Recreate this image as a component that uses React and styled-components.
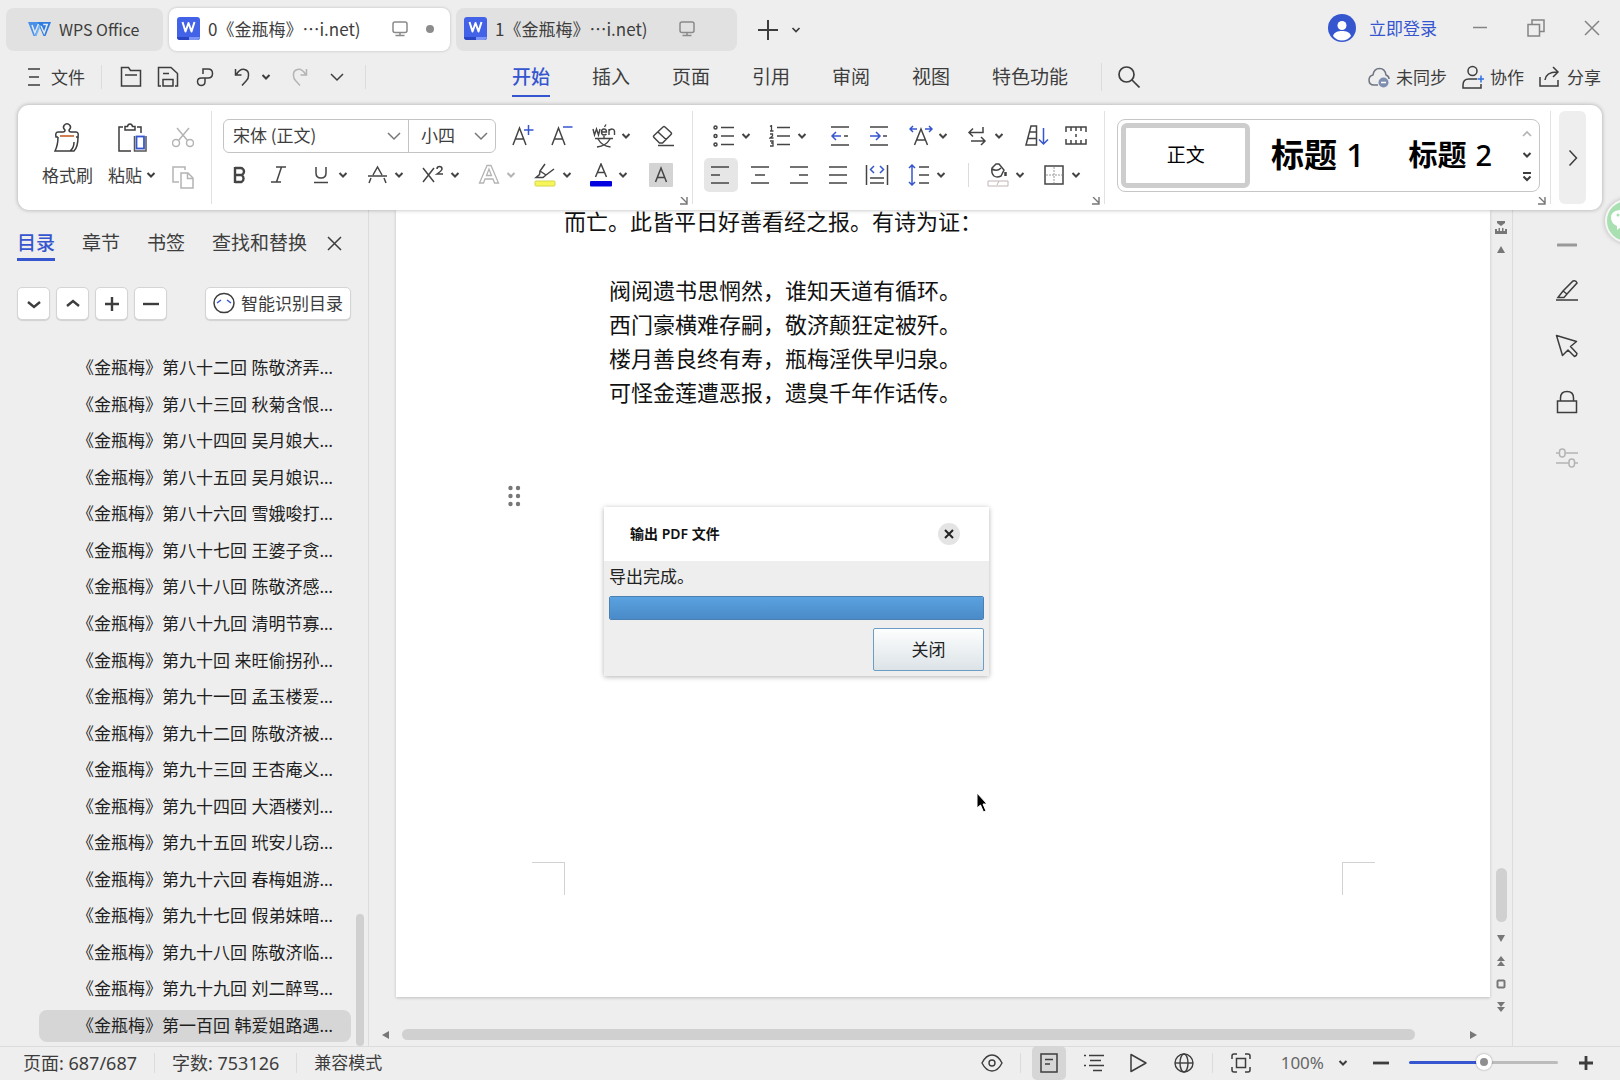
import React, { useState } from 'react'
import styled, { createGlobalStyle } from 'styled-components'

const UI_FONT = `'Noto Sans CJK SC', 'Noto Sans', sans-serif`;
const MIXED_FONT = `'Noto Sans', 'Noto Sans CJK SC', sans-serif`;

const BLUE = '#3656cf';
const INK = '#3d3d3d';
const MUTED = '#b4b4b4';
const LINE = '#dcdcdc';

const GlobalStyle = createGlobalStyle`
  * { box-sizing: border-box; }
  body {
    margin: 0;
    background: #eeeeee;
    color: ${INK};
    font-family: ${UI_FONT};
    font-size: 17px;
    line-height: 24px;
  }
  button, select, input { font: inherit; color: inherit; }
`;

/* ---------- shared parts ---------- */

const Svg = styled.svg`
  display: block;
  flex: none;
  fill: none;
  stroke: currentColor;
  stroke-width: ${props => props.$weight || 1.5};
`;

const Icon = ({ w = 22, h = 22, weight, children }) => (
  <Svg width={w} height={h} viewBox={`0 0 ${w} ${h}`} $weight={weight} aria-hidden="true">{children}</Svg>
);

const Caret = ({ weight = 2 }) => (
  <Icon w={12} h={12} weight={weight}><path d="M2.500 4l3.500 3.500 3.500-3.500" /></Icon>
);

const WideCaret = () => (
  <Icon w={14} h={14}><path d="M1 4l6 6 6-6" /></Icon>
);

const PlainButton = styled.button`
  display: flex;
  align-items: center;
  justify-content: center;
  padding: 0;
  border: 0;
  background: none;
  white-space: nowrap;
  cursor: pointer;
`;

const Divider = styled.span`
  flex: none;
  width: 1px;
  height: ${props => props.$tall || 24}px;
  background: ${LINE};
`;

/* ---------- window ---------- */

const Window = styled.div`
  position: relative;
  display: flex;
  flex-direction: column;
  height: 100vh;
  overflow: hidden;
`;

const TitleBar = styled.header`
  display: flex;
  gap: 6px;
  height: 52px;
  padding: 8px 0 0 6px;
`;

const Tab = styled(PlainButton)`
  justify-content: flex-start;
  gap: 8px;
  width: 281px;
  height: 43px;
  padding: 0 16px 2px 8px;
  border-radius: 8px;
  background: ${props => props.$active ? '#fff' : '#e1e1e1'};
  box-shadow: ${props => props.$active ? '0 0 3px rgba(0, 0, 0, .22)' : 'none'};
`;

const HomeTab = styled(Tab)`
  width: 157px;
  padding: 0 0 2px 22px;
  font-size: 16px;
`;

const TabName = styled.span`
  flex: 1;
  text-align: left;
`;

const Screen = styled.span`
  margin-right: 10px;
  color: #8a8a8a;
`;

const UnsavedDot = styled.span`
  width: 8px;
  height: 8px;
  border-radius: 50%;
  background: ${props => props.$on ? '#8c8c8c' : 'transparent'};
`;

const NewTab = styled.div`
  display: flex;
  height: 43px;
  padding-left: 5px;
`;

const AddButton = styled(PlainButton)`
  width: 40px;
`;

const TabListButton = styled(PlainButton)`
  width: 16px;
`;

const Account = styled.div`
  display: flex;
  align-items: center;
  height: 40px;
  margin-left: auto;
`;

const Login = styled.a`
  display: flex;
  align-items: center;
  gap: 13px;
  margin-right: 15px;
  color: ${BLUE};
  text-decoration: none;
`;

const WindowButton = styled(PlainButton)`
  width: 56px;
  height: 40px;
  color: #858585;
`;

/* ---------- menu ---------- */

const MenuBar = styled.nav`
  display: flex;
  align-items: center;
  flex: none;
  height: 53px;
  padding: 0 19px 3px 28px;
`;

const FileMenu = styled(PlainButton)`
  gap: 11px;
  margin-right: 16px;
`;

const QuickTools = styled.div`
  display: flex;
  align-items: center;
  padding: 0 10px;
`;

const QuickButton = styled(PlainButton)`
  width: 37px;
  height: 36px;
  color: ${props => props.disabled ? MUTED : INK};
`;

const QuickCaret = styled(PlainButton)`
  width: 12px;
  margin-right: 9px;
`;

const MenuTabs = styled.div`
  display: flex;
  gap: 42px;
  margin: 0 33px 0 146px;
`;

const MenuTab = styled(PlainButton)`
  height: 40px;
  padding-bottom: 1px;
  font-size: 19px;
  color: ${props => props.$active ? BLUE : INK};
  font-weight: ${props => props.$active ? 500 : 400};
  border-bottom: 2px solid ${props => props.$active ? BLUE : 'transparent'};
`;

const SearchButton = styled(PlainButton)`
  margin-left: 16px;
`;

const ShareTools = styled.div`
  display: flex;
  gap: 15px;
  margin-left: auto;
`;

const ShareButton = styled(PlainButton)`
  gap: 6px;
`;

/* ---------- ribbon ---------- */

const Ribbon = styled.section`
  position: relative;
  z-index: 2;
  display: flex;
  flex: none;
  height: 105px;
  margin: 0 18px;
  border-radius: 11px;
  background: #fff;
  box-shadow: 0 0 4px rgba(0, 0, 0, .3);
`;

const RibbonLine = styled.span`
  flex: none;
  width: 1px;
  margin: 6px 0;
  background: #e2e2e2;
`;

const Clipboard = styled.div`
  display: flex;
  gap: 15px;
  padding: 18px 17px 0 24px;
`;

const BigTool = styled(PlainButton)`
  flex-direction: column;
  justify-content: flex-start;
  gap: 10px;
`;

const BigLabel = styled.span`
  display: flex;
  align-items: center;
  gap: 3px;
`;

const SmallTools = styled.div`
  display: flex;
  flex-direction: column;
  gap: 17px;
  padding-top: 3px;
  color: ${MUTED};
`;

const Group = styled.div`
  display: flex;
  flex-direction: column;
  padding: 11px 4px 0 8px;
`;

const ToolRow = styled.div`
  display: flex;
  align-items: center;
  height: 39px;
  padding-right: 5px;
`;

const DropBox = styled(PlainButton)`
  justify-content: flex-start;
  gap: 4px;
  width: 56px;
  height: 34px;
  padding-left: 11px;
  color: ${props => props.disabled ? MUTED : '#444'};
`;

const Tool = styled(PlainButton)`
  width: 39px;
  height: 34px;
  color: #444;

  ${DropBox} + & { margin-left: 7px; }
`;

const ToolGlyph = styled.span`
  display: flex;
  justify-content: center;
  width: 24px;
`;

const Pressed = styled.span`
  display: flex;
  align-items: center;
  justify-content: center;
  width: 34px;
  height: 34px;
  border-radius: 5px;
  background: #e6e6e6;
`;

const ToolDivider = styled(Divider)`
  margin: 0 6px 0 16px;
`;

const Launcher = styled(PlainButton)`
  align-self: flex-end;
  margin-top: 3px;
  color: #777;
`;

const Combo = styled.span`
  display: grid;
  align-items: center;
  width: ${props => props.$w}px;
  height: 34px;
  border: 1px solid #c4c4c4;
  border-radius: ${props => props.$last ? '0 6px 6px 0' : '6px 0 0 6px'};
  margin-left: ${props => props.$last ? -1 : 3}px;
  margin-right: ${props => props.$last ? 7 : 0}px;

  & > * { grid-area: 1 / 1; }
  & > svg { justify-self: end; margin-right: 7px; pointer-events: none; color: #777; }
`;

const ComboSelect = styled.select`
  appearance: none;
  width: 100%;
  height: 32px;
  padding: 0 0 1px ${props => props.$pad}px;
  border: 0;
  background: none;
`;

const StyleGroup = styled(Group)`
  flex: 1;
  padding-left: 12px;
`;

const Gallery = styled.div`
  display: flex;
  gap: 3px;
  height: 73px;
  margin: 3px 6px 2px 0;
  padding: 3px;
  border: 1px solid #c6c6c6;
  border-radius: 8px;
`;

const StyleCell = styled(PlainButton)`
  flex: 1;
  padding-bottom: 2px;
  color: #000;
  font-family: ${MIXED_FONT};
  font-size: ${props => props.$size}px;
  line-height: 40px;
  font-weight: ${props => props.$size > 20 ? 700 : 400};
  border: 5px solid ${props => props.$active ? '#cdcdcd' : 'transparent'};
  border-radius: 6px;
`;

const Level = styled.span`
  margin-left: 9px;
  font-weight: 500;
`;

const GallerySteps = styled.div`
  display: flex;
  flex-direction: column;
  justify-content: space-around;
  width: 18px;
`;

const More = styled(PlainButton)`
  width: 27px;
  margin: 6px 16px 6px 8px;
  border-radius: 6px;
  background: #eeeeee;
`;

/* ---------- sidebar ---------- */

const Body = styled.div`
  display: flex;
  flex: 1;
  min-height: 0;
`;

const Sidebar = styled.aside`
  display: flex;
  flex-direction: column;
  flex: none;
  width: 369px;
  border-right: 1px solid ${LINE};
`;

const SideTabs = styled.div`
  display: flex;
  gap: 27px;
  padding: 19px 0 0 17px;
`;

const SideTab = styled(PlainButton)`
  align-items: flex-start;
  height: 32px;
  font-size: 19px;
  line-height: 26px;
  color: ${props => props.$active ? BLUE : INK};
  font-weight: ${props => props.$active ? 500 : 400};
  border-bottom: 3px solid ${props => props.$active ? BLUE : 'transparent'};
`;

const SideClose = styled(PlainButton)`
  height: 28px;
  margin-left: -7px;
`;

const SideTools = styled.div`
  display: flex;
  gap: 6px;
  margin: 26px 17px 30px;
`;

const SquareButton = styled(PlainButton)`
  width: 33px;
  height: 33px;
  border: 1px solid #d4d4d4;
  border-radius: 5px;
  background: #fff;
  box-shadow: 0 1px 1px rgba(0, 0, 0, .12);
`;

const SmartButton = styled(SquareButton)`
  width: auto;
  gap: 6px;
  margin-left: auto;
  padding: 0 7px 1px 7px;
`;

const OutlineWrap = styled.div`
  display: flex;
  flex: 1;
  min-height: 0;
`;

const Outline = styled.ul`
  display: flex;
  flex-direction: column;
  flex: 1;
  margin: 0 5px 2px 39px;
  padding: 0;
  list-style: none;
`;

const OutlineRow = styled.li`
  display: flex;
  flex: 1;
  padding: 2px 0;
`;

const OutlineLink = styled.a`
  display: flex;
  align-items: center;
  flex: 1;
  padding-left: 38px;
  border-radius: 8px;
  background: ${props => props.$active ? '#d6d6d6' : 'none'};
  color: #1f1f1f;
  font-family: ${MIXED_FONT};
  text-decoration: none;
  white-space: nowrap;
`;

const SideTrack = styled.div`
  display: flex;
  align-items: flex-end;
  width: 8px;
  margin-right: 4px;
`;

const Thumb = styled.span`
  width: 100%;
  height: ${props => props.$h};
  border-radius: 6px;
  background: #d0d0d0;
`;

/* ---------- document ---------- */

const DocArea = styled.main`
  position: relative;
  display: flex;
  flex: 1;
  min-width: 0;
`;

const Canvas = styled.div`
  display: flex;
  flex-direction: column;
  flex: 1;
  min-width: 0;
`;

const Page = styled.article`
  display: flex;
  flex-direction: column;
  flex: 1;
  margin: 0 0 26px 27px;
  padding-bottom: 102px;
  background: #fff;
  box-shadow: 0 1px 3px rgba(0, 0, 0, .2);
  color: #111;
  font-family: ${UI_FONT};
  font-size: 22px;
`;

const Prose = styled.p`
  margin: 0;
  padding-left: 168px;
  line-height: 20px;
`;

const Poem = styled.p`
  margin: 42px 0 77px;
  padding-left: 213px;
  line-height: 34px;
`;

const DragHandle = styled.span`
  padding-left: 112px;
  color: #777;
`;

const Corners = styled.div`
  display: flex;
  justify-content: space-between;
  margin-top: auto;
  padding: 0 115px 0 136px;
`;

const Corner = styled.span`
  width: 33px;
  height: 33px;
  border: solid #d2d2d2;
  border-width: ${props => props.$right ? '1px 0 0 1px' : '1px 1px 0 0'};
`;

const HScroll = styled.div`
  display: flex;
  align-items: center;
  gap: 10px;
  height: 23px;
  padding: 0 11px;
  color: #777;
`;

const HTrack = styled.div`
  flex: 1;
`;

const HThumb = styled.div`
  width: 96%;
  height: 11px;
  border-radius: 6px;
  background: #d0d0d0;
`;

const VScroll = styled.div`
  display: flex;
  flex-direction: column;
  align-items: center;
  width: 22px;
  padding: 7px 0 27px;
  color: #777;
`;

const VStep = styled(PlainButton)`
  width: 22px;
  height: 22px;
  margin-bottom: ${props => props.$loose ? 1 : 0}px;
`;

const VTrack = styled.div`
  display: flex;
  align-items: flex-end;
  flex: 1;
  width: 11px;
  margin-bottom: 5px;
`;

const Rail = styled.aside`
  display: flex;
  flex-direction: column;
  align-items: center;
  flex: none;
  width: 108px;
  padding-top: 18px;
  border-left: 1px solid ${LINE};
`;

const RailButton = styled(PlainButton)`
  width: 56px;
  height: ${props => props.$short ? 34 : 56}px;
  color: ${props => props.disabled ? MUTED : INK};
`;

const Bubble = styled.button`
  position: absolute;
  top: 199px;
  right: -29px;
  display: flex;
  align-items: center;
  width: 44px;
  height: 44px;
  padding: 0;
  border: 2px solid #f6f6f6;
  border-radius: 50%;
  background: #a9e0b2;
  box-shadow: 0 0 5px rgba(0, 0, 0, .25);
  color: #fff;
`;

const Pointer = styled.span`
  position: absolute;
  top: 582px;
  left: 607px;
`;

/* ---------- export dialog ---------- */

const Dialog = styled.section`
  position: absolute;
  top: 297px;
  left: 235px;
  width: 385px;
  background: #eeeeee;
  box-shadow: 0 1px 5px rgba(0, 0, 0, .3);
  color: #222;
`;

const DialogHead = styled.div`
  display: flex;
  align-items: center;
  justify-content: space-between;
  height: 54px;
  padding: 0 29px 0 26px;
  background: #fff;
`;

const DialogTitle = styled.h2`
  margin: 0;
  color: #111;
  font-family: ${MIXED_FONT};
  font-size: 14px;
  font-weight: 600;
`;

const RoundClose = styled(PlainButton)`
  width: 22px;
  height: 22px;
  border-radius: 50%;
  background: #e4e4e4;
`;

const DialogBody = styled.div`
  display: flex;
  flex-direction: column;
  padding: 3px 5px 5px;
`;

const ExportBar = styled.progress`
  appearance: none;
  width: 100%;
  height: 24px;
  margin: 8px 0;
  border: 1px solid #4a80b2;
  border-radius: 2px;
  overflow: hidden;

  &::-webkit-progress-bar { background: #eee; }
  &::-webkit-progress-value { background: linear-gradient(#5ba2e0, #4a8ac8); }
`;

const CloseButton = styled(PlainButton)`
  align-self: flex-end;
  width: 111px;
  height: 43px;
  padding-bottom: 2px;
  border: 1px solid #6d9dc5;
  border-radius: 2px;
  background: linear-gradient(#fdfefe, #dce3e7);
`;

/* ---------- status bar ---------- */

const StatusBar = styled.footer`
  display: flex;
  align-items: center;
  gap: 17px;
  flex: none;
  height: 34px;
  padding: 0 17px 2px 23px;
  border-top: 1px solid ${LINE};
  font-family: ${MIXED_FONT};
`;

const Count = styled.span`
  font-size: 18px;
`;

const StatusTools = styled.div`
  display: flex;
  align-items: center;
  gap: 11px;
  margin-left: auto;
`;

const StatusButton = styled(PlainButton)`
  width: 34px;
  height: 34px;
  border-radius: 5px;
  background: ${props => props.$active ? '#d6d6d6' : 'none'};
`;

const ZoomButton = styled(PlainButton)`
  gap: 13px;
  padding: 0 4px 0 12px;
`;

const ZoomValue = styled.span`
  color: #666;
`;

const ZoomRange = styled.input`
  appearance: none;
  width: 149px;
  height: 20px;
  margin: 0;
  background: none;

  &::-webkit-slider-runnable-track {
    height: 3px;
    border-radius: 2px;
    background: linear-gradient(90deg, ${BLUE} 50%, #bcbcbc 50%);
  }
  &::-webkit-slider-thumb {
    appearance: none;
    width: 16px;
    height: 16px;
    margin-top: -7px;
    border: 4px solid #fff;
    border-radius: 50%;
    background: #8f8f8f;
    box-shadow: 0 0 2px rgba(0, 0, 0, .4);
  }
`;

/* ---------- drawings ---------- */

const WpsLogo = () => (
  <Icon w={23} h={16}>
    <path d="M0 1h12l-4.500 14h-2z" fill="#4a90e8" stroke="none" />
    <path d="M9.500 1H23l-5.500 14h-2z" fill="#2f7be0" stroke="none" />
    <path d="M4 4l2.800 8L10.500 3M13 5l3.200 7 3-8.500h-4" stroke="#e4e9f0" strokeWidth="1.500" />
    <path d="M12 4L7.500 15" stroke="#6db0f5" strokeWidth="1.800" />
  </Icon>
);

const WordBadge = () => (
  <Icon w={23} h={23}>
    <rect width="23" height="23" rx="3" fill="#4262e8" stroke="none" />
    <path d="M0 20h23a3 3 0 0 1-3 3H3a3 3 0 0 1-3-3z" fill="#2a45c4" stroke="none" />
    <path d="M12 20h11a3 3 0 0 1-3 3h-8z" fill="#7d96f5" stroke="none" />
    <path d="M5.500 5l3 9.500L11.500 6l3 8.500L17.500 5" stroke="#fff" strokeWidth="2" strokeLinejoin="round" />
  </Icon>
);

const Monitor = () => (
  <Icon w={16} h={16}>
    <rect x="1" y="1" width="14" height="10.500" rx="2" />
    <path d="M8 11.500v3M3.500 14.500h9" />
  </Icon>
);

const Avatar = () => (
  <Icon w={28} h={28}>
    <circle cx="14" cy="14" r="14" fill={BLUE} stroke="none" />
    <circle cx="14" cy="11.500" r="4.500" fill="#fff" stroke="none" />
    <path d="M5 22c1-4 5-5 9-5s8 1 9 5c-2.500 3-5.500 4.500-9 4.500S7.500 25 5 22z" fill="#fff" stroke="none" />
  </Icon>
);

const FormatBrush = () => (
  <Icon w={28} h={30}>
    <path d="M4 14H2q-1-5 2-5h5q2 0 2-2Q8.500 5 10 2.500q3-3.500 6 0Q17.500 5 15 7q0 2 2 2h5q3 0 2 5h-2" />
    <path d="M4 14Q4 22 1 28h19q4-4 4-14M20 19q0 6-4 9" />
    <path d="M6 13h14" stroke="#d08050" strokeWidth="2" />
  </Icon>
);

const PasteBoard = () => (
  <Icon w={30} h={30}>
    <path d="M5 4H1v24h12M19 4h4v6M7 3.500h2.500Q10 1 12 1t2.500 2.500H17V7H7z" />
    <path d="M16.500 13v15H28V13" stroke="#555" />
    <rect x="18.500" y="13.500" width="7.500" height="12" stroke={BLUE} strokeWidth="1.800" />
  </Icon>
);

const Scissors = () => (
  <Icon>
    <path d="M5 2l10.500 12.500M17 2L6.500 14.500" />
    <circle cx="4" cy="17" r="3.500" /><circle cx="18" cy="17" r="3.500" />
  </Icon>
);

const CopyPages = () => (
  <Icon w={22} h={24}>
    <path d="M7 17H1V2h12v3" />
    <path d="M9 8h7l5 5v10H9zM15.500 8v5.500H21" />
  </Icon>
);

const TextUp = () => <Icon><path d="M1 20L7.500 3 14 20M3.500 14h8" /><path d="M16.500 0v10M12 5h9.500" stroke={BLUE} /></Icon>;
const TextDown = () => <Icon><path d="M1 20L7.500 3 14 20M3.500 14h8" /><path d="M12 2h9.500" stroke={BLUE} /></Icon>;

const Pinyin = () => (
  <Icon w={24} h={24} weight={1.400}>
    <path d="M1 5l1.500 6 2-6 2 6L8 5M9.500 8h5q0-3-2.500-3T9.500 8t2.500 3q1.500 0 2.500-1M12.500 3L14 .5M17 11V5M17 7q1-2 3-2t2.500 2v4" />
    <path d="M3 14.500h18M12 12v2.500M6 15q4 7 12.500 8M18 15q-4 7-13 8" />
  </Icon>
);

const Eraser = () => (
  <Icon w={24} h={22}><path d="M7.500 18L2 12.500Q1 11.500 2 10.500L11 2q1-1 2 0l6 5.500q1 1 0 2L10.500 18zM6 7l8 7.500M6 20.500h16" /></Icon>
);

const Bold = () => <Icon weight={2.400}><path d="M6 3v16M6 4h5.500a3.500 3.500 0 0 1 0 7H6h6.500a4 4 0 0 1 0 7H6" /></Icon>;
const Italic = () => <Icon><path d="M8 3h10M3 18h10M13.500 3l-5 15" /></Icon>;
const Underline = () => <Icon><path d="M6 3v6q0 5 5 5t5-5V3M4 18.500h14" /></Icon>;
const Strike = () => <Icon><path d="M2 12h19M7 11l4.500-8L16 11M5 14l-2 5M18 14l2 5" /></Icon>;
const Superscript = () => <Icon><path d="M1 4l11 14M12 4L1 18M15 5q0-2.500 2.500-2.500T20 5q0 1.500-5 5h6" /></Icon>;

const OutlineA = () => (
  <Icon weight={1.300}><path d="M1.500 19L9 1.500h4L20.500 19h-4l-1.500-4H7l-1.500 4zM8.500 11.500h5L11 5z" /></Icon>
);

const Highlighter = () => (
  <Icon w={22} h={24}>
    <path d="M11 1L6 8l-.5 3.500L2 14.500h7l3-2.500 8-6M6 8l6 4" />
    <rect x="1" y="18" width="20" height="5" rx="1" fill="#f6f65a" stroke="#d6d64c" strokeWidth="1" />
  </Icon>
);

const FontColor = () => (
  <Icon w={22} h={24}>
    <path d="M5.500 14L11 1l5.500 13M7.500 9.500h7" />
    <rect x="0" y="18" width="22" height="5.500" rx="1" fill="#0000e0" stroke="none" />
  </Icon>
);

const ShadedA = () => (
  <Icon w={24} h={24}>
    <rect width="24" height="24" rx="1" fill="#d4d4d4" stroke="none" />
    <path d="M6.500 19L12 5l5.500 14M8.500 14.500h7" />
  </Icon>
);

const Bullets = () => (
  <Icon>
    <path d="M8 2.500h13M8 11h13M8 19.500h13" />
    <circle cx="2.500" cy="2.500" r="1.500" /><circle cx="2.500" cy="11" r="1.500" /><circle cx="2.500" cy="19.500" r="1.500" />
  </Icon>
);

const Numbered = () => (
  <Icon>
    <path d="M8 2.500h13M8 11h13M8 19.500h13" />
    <path d="M1 1.500l1.500-1V6M1 6h3.500M1 9h2.500v2L1 13h3.500M1 16h3v2H2h2v3H1" strokeWidth="1.300" />
  </Icon>
);

const Outdent = () => <Icon><path d="M2 2h18M2 20h18M15 11h4" /><path d="M12 11H3M7 7l-4 4 4 4" stroke={BLUE} /></Icon>;
const Indent = () => <Icon><path d="M2 2h18M2 20h18M15 11h4" /><path d="M2 11h10M8 7l4 4-4 4" stroke={BLUE} /></Icon>;

const Scale = () => (
  <Icon w={24} h={22}>
    <path d="M5.500 20L12 4l6.500 16M7.500 15h9" />
    <path d="M1 4h7M4 1L1 4l3 3M16 4h7M20 1l3 3-3 3" stroke={BLUE} />
  </Icon>
);

const Wrap = () => <Icon><path d="M17 2v5.500H3M7 3.500l-4 4 4 4M5 16h14M15 12l4 4-4 4" /></Icon>;

const Sort = () => (
  <Icon w={24} h={22}>
    <path d="M6 1h5.500v19H1zM5 7h6.500M3 13.500h8.500" />
    <path d="M18.500 3v16M14 14.500l4.500 4.500 4.500-4.500" stroke={BLUE} />
  </Icon>
);

const Marks = () => (
  <Icon w={22} h={20}><path d="M1 6V1h20v5M6 1v4M11 1v4M16 1v4M1 13v5h20v-5M6 18v-4M11 18v-4M16 18v-4M11 8v3" /></Icon>
);

const alignPaths = {
  left: 'M1 3h18M1 11h9M1 19h18',
  center: 'M2 3h18M6 11h10M2 19h18',
  right: 'M2 3h18M11 11h9M2 19h18',
  justify: 'M2 3h18M2 11h18M2 19h18',
};
const Align = ({ kind }) => <Icon><path d={alignPaths[kind]} /></Icon>;

const Distribute = () => (
  <Icon w={24} h={22}>
    <path d="M1.500 1v20M22.500 1v20M5 14h14M5 19h14" />
    <path d="M9 2L5.500 5.500 9 9M15 2l3.500 3.500L15 9" stroke={BLUE} />
  </Icon>
);

const LineSpacing = () => (
  <Icon>
    <path d="M11 3h10M11 11h10M11 19h10" />
    <path d="M4 1v20M1 4l3-3 3 3M1 18l3 3 3-3" stroke={BLUE} />
  </Icon>
);

const Bucket = () => (
  <Icon w={22} h={24}>
    <path d="M5 5L9 1h3l5 6-3 6q-4 2-7 0Q4 10 5 5zM5 6q5 3 9-1" /><path d="M18.500 9v4" strokeWidth="2.500" />
    <path d="M1 18h20v5H1zM10 22l2-4" stroke="#c2b4b4" strokeWidth="1" />
  </Icon>
);

const Borders = () => (
  <Icon w={20} h={20}>
    <rect x="1" y="1" width="18" height="18" />
    <path d="M10 2v16M2 10h16" stroke="#999" strokeWidth="1" strokeDasharray="2 1" />
  </Icon>
);

const LaunchIcon = () => <Icon w={8} h={8} weight={1.400}><path d="M1 0l6 6M7 0v7H0" /></Icon>;
const Cross = ({ s = 14, weight }) => <Icon w={s} h={s} weight={weight}><path d={`M1 1l${s - 2} ${s - 2}M${s - 1} 1L1 ${s - 1}`} /></Icon>;

const Triangle = ({ d }) => <Icon w={12} h={12}><path d={d} fill="currentColor" stroke="none" /></Icon>;

/* ---------- content ---------- */

const menus = ['开始', '插入', '页面', '引用', '审阅', '视图', '特色功能'];
const sideTabs = ['目录', '章节', '书签', '查找和替换'];

const chapters = [
  '第八十二回 陈敬济弄', '第八十三回 秋菊含恨', '第八十四回 吴月娘大', '第八十五回 吴月娘识',
  '第八十六回 雪娥唆打', '第八十七回 王婆子贪', '第八十八回 陈敬济感', '第八十九回 清明节寡',
  '第九十回 来旺偷拐孙', '第九十一回 孟玉楼爱', '第九十二回 陈敬济被', '第九十三回 王杏庵义',
  '第九十四回 大酒楼刘', '第九十五回 玳安儿窃', '第九十六回 春梅姐游', '第九十七回 假弟妹暗',
  '第九十八回 陈敬济临', '第九十九回 刘二醉骂', '第一百回 韩爱姐路遇',
];

const DropTool = ({ label, disabled, children }) => (
  <DropBox disabled={disabled} aria-label={label}>
    <ToolGlyph>{children}</ToolGlyph>
    <Caret />
  </DropBox>
);

const Title = () => (
  <TitleBar>
    <HomeTab><WpsLogo />WPS Office</HomeTab>
    <Tab $active>
      <WordBadge />
      <TabName>0《金瓶梅》…i.net)</TabName>
      <Screen><Monitor /></Screen>
      <UnsavedDot $on />
    </Tab>
    <Tab>
      <WordBadge />
      <TabName>1《金瓶梅》…i.net)</TabName>
      <Screen><Monitor /></Screen>
      <UnsavedDot />
    </Tab>
    <NewTab>
      <AddButton aria-label="新建"><Icon w={20} h={20} weight={2}><path d="M10 0v20M0 10h20" /></Icon></AddButton>
      <TabListButton aria-label="标签列表"><Caret weight={1.700} /></TabListButton>
    </NewTab>
    <Account>
      <Login href="#login"><Avatar />立即登录</Login>
      <WindowButton aria-label="最小化"><Icon w={14} h={14}><path d="M0 6.500h14" /></Icon></WindowButton>
      <WindowButton aria-label="还原">
        <Icon w={18} h={18}><path d="M1 5.500h11.500V17H1zM5 5.500V1h12v11.500h-4.500" /></Icon>
      </WindowButton>
      <WindowButton aria-label="关闭窗口"><Cross s={16} /></WindowButton>
    </Account>
  </TitleBar>
);

const Menu = () => {
  const [active, setActive] = useState('开始');

  return (
    <MenuBar>
      <FileMenu>
        <Icon w={12} h={18}><path d="M0 1h12M1 9h10M0 17h12" /></Icon>
        文件
      </FileMenu>
      <Divider />
      <QuickTools>
        <QuickButton aria-label="打开">
          <Icon><path d="M1.500 20V1.500h7l2 3h10V20zM5 9h12" /></Icon>
        </QuickButton>
        <QuickButton aria-label="保存">
          <Icon><path d="M4 20H1.500V1.500H14l6.500 6V20H18M6 20v-6.500h10V20zM6 7.500h6" /></Icon>
        </QuickButton>
        <QuickButton aria-label="输出为PDF">
          <Icon w={18} h={20}><path d="M7 7V2h5q4.500 0 4.500 4.500T12 11H5.500Q1.500 11 1.500 14.500T5 18.500q4 0 4-4V11" /></Icon>
        </QuickButton>
        <QuickButton aria-label="撤销">
          <Icon w={16} h={20}><path d="M1.500 2v6h6M2 8Q6 1.500 10.500 2.500t4 6q0 3-2 5L8 18.500" /></Icon>
        </QuickButton>
        <QuickCaret aria-label="撤销列表"><Caret /></QuickCaret>
        <QuickButton disabled aria-label="恢复">
          <Icon w={16} h={20}><path d="M14.500 2v6h-6M14 8Q10 1.500 5.500 2.500t-4 6q0 3 2 5L8 18.500" /></Icon>
        </QuickButton>
        <QuickButton aria-label="更多"><WideCaret /></QuickButton>
      </QuickTools>
      <Divider />
      <MenuTabs>
        {menus.map(name => (
          <MenuTab key={name} $active={name === active} onClick={() => setActive(name)}>{name}</MenuTab>
        ))}
      </MenuTabs>
      <Divider $tall={28} />
      <SearchButton aria-label="搜索">
        <Icon weight={1.700}><circle cx="8.500" cy="8.500" r="7.500" /><path d="M14 14l7.500 7.500" /></Icon>
      </SearchButton>
      <ShareTools>
        <ShareButton>
          <Icon>
            <path d="M10 19H6q-5 0-5-5 0-4 4-5 1-6.500 6.500-6.500T18 9q3 1 3 4" stroke="#6e7480" />
            <circle cx="15.500" cy="16.500" r="5" fill="#7f8db0" stroke="none" /><path d="M13 16.500h5" stroke="#fff" />
          </Icon>
          未同步
        </ShareButton>
        <ShareButton>
          <Icon w={22} h={24}>
            <circle cx="10.500" cy="6" r="4.500" /><path d="M19 19v4H1v-3q0-6 6-6h8" />
            <path d="M19 10.500v7M15.500 14H22" stroke="#2f6fe0" />
          </Icon>
          协作
        </ShareButton>
        <ShareButton>
          <Icon><path d="M1 11v9h18v-6M6 14q1-8 12-8M14 1l5 5-5 5" /></Icon>
          分享
        </ShareButton>
      </ShareTools>
    </MenuBar>
  );
};

const Toolbar = () => (
  <Ribbon>
    <Clipboard>
      <BigTool><FormatBrush /><BigLabel>格式刷</BigLabel></BigTool>
      <BigTool><PasteBoard /><BigLabel>粘贴<Caret /></BigLabel></BigTool>
      <SmallTools>
        <PlainButton aria-label="剪切" disabled><Scissors /></PlainButton>
        <PlainButton aria-label="复制" disabled><CopyPages /></PlainButton>
      </SmallTools>
    </Clipboard>
    <RibbonLine />

    <Group>
      <ToolRow>
        <Combo $w={186}>
          <ComboSelect $pad={9} aria-label="字体"><option>宋体 (正文)</option></ComboSelect>
          <WideCaret />
        </Combo>
        <Combo $w={88} $last>
          <ComboSelect $pad={12} aria-label="字号"><option>小四</option></ComboSelect>
          <WideCaret />
        </Combo>
        <Tool aria-label="增大字号"><TextUp /></Tool>
        <Tool aria-label="减小字号"><TextDown /></Tool>
        <DropTool label="拼音指南"><Pinyin /></DropTool>
        <Tool aria-label="清除格式"><Eraser /></Tool>
      </ToolRow>
      <ToolRow>
        <Tool aria-label="加粗"><Bold /></Tool>
        <Tool aria-label="倾斜"><Italic /></Tool>
        <DropTool label="下划线"><Underline /></DropTool>
        <DropTool label="删除线"><Strike /></DropTool>
        <DropTool label="上标"><Superscript /></DropTool>
        <DropTool label="文字效果" disabled><OutlineA /></DropTool>
        <DropTool label="突出显示"><Highlighter /></DropTool>
        <DropTool label="字体颜色"><FontColor /></DropTool>
        <Tool aria-label="字符底纹"><ShadedA /></Tool>
      </ToolRow>
      <Launcher aria-label="字体设置"><LaunchIcon /></Launcher>
    </Group>
    <RibbonLine />

    <Group>
      <ToolRow>
        <DropTool label="项目符号"><Bullets /></DropTool>
        <DropTool label="编号"><Numbered /></DropTool>
        <Tool aria-label="减少缩进"><Outdent /></Tool>
        <Tool aria-label="增加缩进"><Indent /></Tool>
        <DropTool label="中文版式"><Scale /></DropTool>
        <DropTool label="换行"><Wrap /></DropTool>
        <Tool aria-label="排序"><Sort /></Tool>
        <Tool aria-label="制表位"><Marks /></Tool>
      </ToolRow>
      <ToolRow>
        <Tool aria-label="左对齐"><Pressed><Align kind="left" /></Pressed></Tool>
        <Tool aria-label="居中"><Align kind="center" /></Tool>
        <Tool aria-label="右对齐"><Align kind="right" /></Tool>
        <Tool aria-label="两端对齐"><Align kind="justify" /></Tool>
        <Tool aria-label="分散对齐"><Distribute /></Tool>
        <DropTool label="行距"><LineSpacing /></DropTool>
        <ToolDivider />
        <DropTool label="底纹颜色"><Bucket /></DropTool>
        <DropTool label="边框"><Borders /></DropTool>
      </ToolRow>
      <Launcher aria-label="段落设置"><LaunchIcon /></Launcher>
    </Group>
    <RibbonLine />

    <StyleGroup>
      <Gallery>
        <StyleCell $size={19} $active>正文</StyleCell>
        <StyleCell $size={33}>标题 <Level>1</Level></StyleCell>
        <StyleCell $size={29}>标题 <Level>2</Level></StyleCell>
        <GallerySteps>
          <PlainButton aria-label="上一行" disabled>
            <Icon w={10} h={8} weight={1.700}><path d="M1 6l4-4 4 4" stroke={MUTED} /></Icon>
          </PlainButton>
          <PlainButton aria-label="下一行"><Icon w={10} h={8} weight={2}><path d="M1.500 2L5 5.500 8.500 2" /></Icon></PlainButton>
          <PlainButton aria-label="展开样式">
            <Icon w={10} h={10} weight={2}><path d="M1 1h8M1.500 4.500L5 8l3.500-3.500" /></Icon>
          </PlainButton>
        </GallerySteps>
      </Gallery>
      <Launcher aria-label="样式设置"><LaunchIcon /></Launcher>
    </StyleGroup>
    <RibbonLine />
    <More aria-label="更多功能"><Icon w={10} h={18}><path d="M1.500 1.500L8.500 9l-7 7.500" /></Icon></More>
  </Ribbon>
);

const Navigation = () => (
  <Sidebar>
    <SideTabs>
      {sideTabs.map((name, i) => <SideTab key={name} $active={i === 0}>{name}</SideTab>)}
      <SideClose aria-label="关闭目录"><Cross s={15} /></SideClose>
    </SideTabs>
    <SideTools>
      <SquareButton aria-label="展开"><Icon w={18} h={18} weight={2.400}><path d="M3 7l6 5 6-5" /></Icon></SquareButton>
      <SquareButton aria-label="收起"><Icon w={18} h={18} weight={2.400}><path d="M3 11l6-5 6 5" /></Icon></SquareButton>
      <SquareButton aria-label="提升级别"><Icon w={18} h={18} weight={2.400}><path d="M9 2v14M2 9h14" /></Icon></SquareButton>
      <SquareButton aria-label="降低级别"><Icon w={18} h={18} weight={2.400}><path d="M1 9h16" /></Icon></SquareButton>
      <SmartButton>
        <Icon><rect x="1" y="1.500" width="20" height="19" rx="9.500" /><path d="M4 11l4-3M18 11l-4-3" stroke={BLUE} /></Icon>
        智能识别目录
      </SmartButton>
    </SideTools>
    <OutlineWrap>
      <Outline>
        {chapters.map((name, i) => (
          <OutlineRow key={name}>
            <OutlineLink href="#page" $active={i === chapters.length - 1}>《金瓶梅》{name}…</OutlineLink>
          </OutlineRow>
        ))}
      </Outline>
      <SideTrack><Thumb $h="19%" /></SideTrack>
    </OutlineWrap>
  </Sidebar>
);

const ExportDialog = () => (
  <Dialog role="dialog" aria-labelledby="export-title">
    <DialogHead>
      <DialogTitle id="export-title">输出 PDF 文件</DialogTitle>
      <RoundClose aria-label="关闭对话框"><Cross s={10} weight={2} /></RoundClose>
    </DialogHead>
    <DialogBody>
      <label htmlFor="export-progress">导出完成。</label>
      <ExportBar id="export-progress" value={100} max={100} />
      <CloseButton>关闭</CloseButton>
    </DialogBody>
  </Dialog>
);

const Document = () => (
  <DocArea>
    <Canvas>
      <Page id="page">
        <Prose>而亡。此皆平日好善看经之报。有诗为证：</Prose>
        <Poem>
          阀阅遗书思惘然，谁知天道有循环。<br />
          西门豪横难存嗣，敬济颠狂定被歼。<br />
          楼月善良终有寿，瓶梅淫佚早归泉。<br />
          可怪金莲遭恶报，遗臭千年作话传。
        </Poem>
        <DragHandle>
          <Icon w={14} h={22}>
            <g fill="currentColor" stroke="none">
              {[3, 11, 19].map(y => <g key={y}><circle cx="2.500" cy={y} r="2.200" /><circle cx="10" cy={y} r="2.200" /></g>)}
            </g>
          </Icon>
        </DragHandle>
        <Corners><Corner /><Corner $right /></Corners>
      </Page>
      <HScroll>
        <Triangle d="M9 2v8L2 6z" />
        <HTrack><HThumb /></HTrack>
        <Triangle d="M3 2v8l7-4z" />
      </HScroll>
    </Canvas>
    <VScroll>
      <VStep aria-label="拆分窗口">
        <Icon w={12} h={14}>
          <path d="M2 0h8v2L6 5 2 2zM0 8h2v2h1.500V7h1.500v3h2V7h1.500v3H10V8h2v5H0z" fill="currentColor" stroke="none" />
        </Icon>
      </VStep>
      <VStep aria-label="向上"><Triangle d="M2 9h8L6 2z" /></VStep>
      <VTrack><Thumb $h="54px" /></VTrack>
      <VStep $loose aria-label="向下"><Triangle d="M2 3h8L6 10z" /></VStep>
      <VStep $loose aria-label="上一页"><Triangle d="M2 6h8L6 1zM2 11h8L6 6z" /></VStep>
      <VStep $loose aria-label="选择浏览对象">
        <Icon w={12} h={12} weight={2}><rect x="2.500" y="2.500" width="7" height="7" rx="1" /></Icon>
      </VStep>
      <VStep $loose aria-label="下一页"><Triangle d="M2 1h8L6 6zM2 6h8l-4 5z" /></VStep>
    </VScroll>
    <ExportDialog />
    <Pointer>
      <Icon w={14} h={22}>
        <path d="M1 1v15l3.500-3 3 7 2.500-1-3-7h4z" fill="#000" stroke="#fff" strokeWidth="1" />
      </Icon>
    </Pointer>
  </DocArea>
);

const SideRail = () => (
  <Rail>
    <RailButton $short aria-label="折叠"><Icon w={20} h={4} weight={3}><path d="M1 2h18" stroke="#999" strokeLinecap="round" /></Icon></RailButton>
    <RailButton aria-label="批注">
      <Icon><path d="M2 18.500L7 12 17 2q3-1 4 2L11 15l-3 3.500zM7 12l4 3M0 21h22" /></Icon>
    </RailButton>
    <RailButton aria-label="选择">
      <Icon w={24} h={24}><path d="M1.500 1.500l20 6-6 5 6.500 7q0 2-2.500 3L13 16l-5.500 5.500z" strokeLinejoin="round" /></Icon>
    </RailButton>
    <RailButton aria-label="限制编辑">
      <Icon w={22} h={24}><path d="M1.500 11h19v11.500h-19zM4.500 11V8q0-6.500 6.500-6.500T17.500 8v3" /></Icon>
    </RailButton>
    <RailButton disabled aria-label="属性">
      <Icon>
        <path d="M0 6h3.500M9 6h13M0 16h13M18.500 16H22" />
        <rect x="3.500" y="2" width="5.500" height="8" rx="2.700" /><rect x="13" y="12" width="5.500" height="8" rx="2.700" />
      </Icon>
    </RailButton>
  </Rail>
);

const Status = () => {
  const [zoom, setZoom] = useState(100);

  return (
    <StatusBar>
      <Count>页面: 687/687</Count>
      <Divider $tall={20} />
      <Count>字数: 753126</Count>
      <Divider $tall={20} />
      <span>兼容模式</span>
      <StatusTools>
        <StatusButton aria-label="护眼模式">
          <Icon weight={1.400}><path d="M1 11q4-8 10-8t10 8q-4 8-10 8T1 11z" /><circle cx="11" cy="11" r="3" /></Icon>
        </StatusButton>
        <Divider $tall={20} />
        <StatusButton $active aria-label="页面视图">
          <Icon w={18} h={20}><rect x="1" y="1" width="16" height="18" /><path d="M5 6.500h8M5 11h5" /></Icon>
        </StatusButton>
        <StatusButton aria-label="大纲视图">
          <Icon w={20} h={18}><path d="M0 1.500h2M5 1.500h15M6 6.500h11M0 11.500h2M5 11.500h15M9 16.500h9" /></Icon>
        </StatusButton>
        <StatusButton aria-label="阅读版式">
          <Icon w={17} h={20}><path d="M1 1.500v17L16 10z" strokeLinejoin="round" /></Icon>
        </StatusButton>
        <StatusButton aria-label="网页视图">
          <Icon w={20} h={20} weight={1.400}><circle cx="10" cy="10" r="9" /><ellipse cx="10" cy="10" rx="4" ry="9" /><path d="M1 10h18" /></Icon>
        </StatusButton>
        <Divider $tall={20} />
        <StatusButton aria-label="适合窗口">
          <Icon w={20} h={20}><path d="M1 6V3q0-2 2-2h3M14 1h3q2 0 2 2v3M19 14v3q0 2-2 2h-3M6 19H3q-2 0-2-2v-3" /><rect x="5.500" y="5.500" width="9" height="9" /></Icon>
        </StatusButton>
        <ZoomButton><ZoomValue>{zoom}%</ZoomValue><Caret /></ZoomButton>
        <StatusButton aria-label="缩小" onClick={() => setZoom(zoom - 10)}>
          <Icon w={18} h={18} weight={2.800}><path d="M1 9h16" /></Icon>
        </StatusButton>
        <ZoomRange type="range" min={0} max={200} value={zoom} aria-label="缩放" onChange={e => setZoom(+e.target.value)} />
        <StatusButton aria-label="放大" onClick={() => setZoom(zoom + 10)}>
          <Icon w={16} h={16} weight={2.800}><path d="M8 1v14M1 8h14" /></Icon>
        </StatusButton>
      </StatusTools>
    </StatusBar>
  );
};

const App = () => (
  <Window>
    <GlobalStyle />
    <Title />
    <Menu />
    <Toolbar />
    <Body>
      <Navigation />
      <Document />
      <SideRail />
    </Body>
    <Status />
    <Bubble aria-label="微信">
      <Icon w={40} h={40}>
        <path d="M14 9q10 0 10 8.500T14 26l-4 3v-4q-6-3-6-8 0-8 10-8z" fill="#fff" stroke="none" />
        <circle cx="11" cy="14" r="1.500" fill="#a9e0b2" stroke="none" />
      </Icon>
    </Bubble>
  </Window>
);

export default App
